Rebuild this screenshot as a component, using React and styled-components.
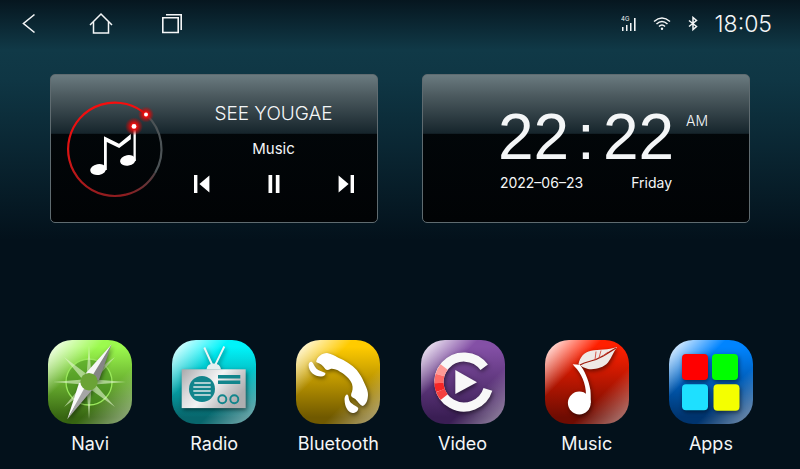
import React from 'react'
import styled, { createGlobalStyle } from 'styled-components'

const GlobalStyle = createGlobalStyle`
    * {
        box-sizing: border-box;
    }

    body {
        margin: 0;
        background-color: #03111b;
        color: #f4f6f7;
        font-family: Inter, "Liberation Sans", sans-serif;
    }
`

const apps = [
    { name: 'Navi', top: '#9cfa4e', bottom: '#376512', icon: <NaviIcon /> },
    { name: 'Radio', top: '#00f4fa', bottom: '#08666c', icon: <RadioIcon /> },
    { name: 'Bluetooth', top: '#ffcb00', bottom: '#705900', icon: <PhoneIcon /> },
    { name: 'Video', top: '#8450a6', bottom: '#3a1e54', icon: <VideoIcon /> },
    { name: 'Music', top: '#ff2000', bottom: '#6e0c02', icon: <MusicIcon /> },
    { name: 'Apps', top: '#0084ff', bottom: '#00346e', icon: <AppsIcon /> },
]

function App() {
    return (
        <Screen>
            <GlobalStyle />
            <StatusBar />
            <Widgets>
                <MusicWidget />
                <ClockWidget />
            </Widgets>
            <Dock>
                {apps.map(app => (
                    <DockItem key={app.name} href={`#${app.name.toLowerCase()}`}>
                        <Tile $top={app.top} $bottom={app.bottom}>{app.icon}</Tile>
                        <DockLabel>{app.name}</DockLabel>
                    </DockItem>
                ))}
            </Dock>
        </Screen>
    )
}

export default App

function StatusBar() {
    return (
        <Header>
            <NavButtons>
                <IconButton aria-label="Back">
                    <svg width="24" height="24" fill="none" stroke="#f4f6f7" strokeWidth="1.6">
                        <path d="M17.5 2.5L6.5 11.5L17.5 20.5" />
                    </svg>
                </IconButton>
                <IconButton aria-label="Home">
                    <svg width="24" height="24" fill="none" stroke="#f4f6f7" strokeWidth="1.5">
                        <path d="M1 13L12 2L23 13" />
                        <path d="M4.5 10V21H19.5V10" />
                    </svg>
                </IconButton>
                <IconButton aria-label="Recent apps">
                    <svg width="24" height="24" fill="none" stroke="#f4f6f7" strokeWidth="1.6">
                        <path d="M1.8 5.8H17.2V20.5H1.8Z" />
                        <path d="M5 2.8H20.2V18" />
                    </svg>
                </IconButton>
            </NavButtons>
            <Indicators>
                <svg width="16" height="16" fill="#f4f6f7">
                    <text x="0" y="5" fontSize="6" fontFamily="Inter, sans-serif">4G</text>
                    <path d="M1 11h1.5v4H1zM5 9h1.5v6H5zM9 7h1.5v8H9zM13 2h1.6v13H13z" />
                </svg>
                <svg width="18" height="16" fill="none" stroke="#f4f6f7" strokeWidth="1.5">
                    <path d="M1 5.5Q9 -1.5 17 5.5" />
                    <path d="M3.5 8Q9 3 14.5 8" />
                    <path d="M6 10.5Q9 7.5 12 10.5" />
                    <circle cx="9" cy="12.8" r="1.2" fill="#f4f6f7" stroke="none" />
                </svg>
                <svg width="12" height="16" fill="none" stroke="#f4f6f7" strokeWidth="1.5">
                    <path d="M2 4.5L9.5 10.5L6 13.5V1.5L9.5 4.5L2 10.5" />
                </svg>
                <SystemTime>18:05</SystemTime>
            </Indicators>
        </Header>
    )
}

function MusicWidget() {
    return (
        <MusicCard>
            <svg width="104" height="104" viewBox="12 22 104 104">
                <defs>
                    <linearGradient id="ring" gradientUnits="userSpaceOnUse" x1="60" y1="27" x2="72" y2="122">
                        <stop offset="0" stopColor="#f80d0d" />
                        <stop offset="0.5" stopColor="#d81414" />
                        <stop offset="1" stopColor="#8d1d20" />
                    </linearGradient>
                    <linearGradient id="tail" gradientUnits="userSpaceOnUse" x1="76" y1="120" x2="108" y2="92">
                        <stop offset="0" stopColor="#8d1d20" />
                        <stop offset="1" stopColor="#43474a" />
                    </linearGradient>
                    <radialGradient id="glow">
                        <stop offset="0.25" stopColor="#ff1010" />
                        <stop offset="0.5" stopColor="#d80c0c" stopOpacity="0.8" />
                        <stop offset="1" stopColor="#c00808" stopOpacity="0" />
                    </radialGradient>
                </defs>
                <g fill="none" strokeWidth="2.2">
                    <path d="M96 39.5A46.7 46.7 0 0 1 105 98" stroke="#4c5356" />
                    <path d="M105 98A46.7 46.7 0 0 1 76 119.6" stroke="url(#tail)" />
                    <path d="M76 119.6A46.7 46.7 0 1 1 96 39.5" stroke="url(#ring)" />
                </g>
                <g fill="#ffffff">
                    <ellipse cx="48.2" cy="94.6" rx="8" ry="5.4" transform="rotate(-10 48.2 94.6)" />
                    <ellipse cx="77.8" cy="85.4" rx="7.8" ry="5.3" transform="rotate(-10 77.8 85.4)" />
                    <path d="M54 61.3L69 68.7L80.8 59V64.2L69.2 73L56.8 67V95H54Z" />
                    <path d="M83.5 55H85.8V86H83.5Z" />
                </g>
                <circle cx="96" cy="39.5" r="8" fill="url(#glow)" />
                <circle cx="96" cy="39.5" r="2" fill="#ffffff" />
                <circle cx="84" cy="51.4" r="9" fill="url(#glow)" />
                <circle cx="84" cy="51.4" r="2.4" fill="#ffffff" />
            </svg>
            <Player>
                <TrackTitle>SEE YOUGAE</TrackTitle>
                <TrackSource>Music</TrackSource>
                <Controls>
                    <IconButton aria-label="Previous">
                        <svg width="16" height="18" fill="#ffffff">
                            <path d="M0 0H3.4V18H0ZM5.4 9L15.4 0.5V17.5Z" />
                        </svg>
                    </IconButton>
                    <IconButton aria-label="Pause">
                        <svg width="12" height="18" fill="#ffffff">
                            <path d="M0.5 0H4.2V18H0.5ZM7.8 0H11.5V18H7.8Z" />
                        </svg>
                    </IconButton>
                    <IconButton aria-label="Next">
                        <svg width="16" height="18" fill="#ffffff">
                            <path d="M0.6 0.5L10.6 9L0.6 17.5ZM12.6 0H16V18H12.6Z" />
                        </svg>
                    </IconButton>
                </Controls>
            </Player>
        </MusicCard>
    )
}

function ClockWidget() {
    return (
        <ClockCard>
            <Clock>
                <Digits>
                    <span>22</span>
                    <span>:</span>
                    <span>22</span>
                </Digits>
                <DateRow>
                    <span>2022–06–23</span>
                    <span>Friday</span>
                </DateRow>
            </Clock>
            <Meridiem>AM</Meridiem>
        </ClockCard>
    )
}

function NaviIcon() {
    return (
        <svg width="84" height="84">
            <circle cx="41" cy="42" r="23" fill="#3f8a1c" fillOpacity="0.5" stroke="#9ae85c" strokeWidth="1.3" />
            <g fill="#e4f7d0" fillOpacity="0.6">
                <path d="M41 5L43.5 36L41 42L38.5 36ZM41 79L43.5 48L41 42L38.5 48Z" />
                <path d="M5 42L35 39.5L41 42L35 44.5ZM78 42L47 39.5L41 42L47 44.5Z" />
                <path d="M16 17L40 35L41 42L35 40ZM67 67L42 49L41 42L47 44Z" />
                <path d="M16 67L35 44L41 42L40 49ZM67 17L47 40L41 42L42 35Z" />
            </g>
            <Shadowed>
                <path d="M63.7 4.3L38 33L41 42L46 36Z" fill="#f6f6f6" />
                <path d="M63.7 4.3L46 33L41 42L51 40Z" fill="#858585" />
                <path d="M19.3 79.3L31 43L41 42L38 48Z" fill="#fbfbfb" />
                <path d="M19.3 79.3L37 47L41 42L44 50Z" fill="#a5a5a5" />
            </Shadowed>
            <circle cx="41" cy="41.7" r="8.7" fill="#6ba336" />
        </svg>
    )
}

function RadioIcon() {
    return (
        <svg width="84" height="84">
            <defs>
                <linearGradient id="silver" x1="0" y1="0" x2="1" y2="0.5">
                    <stop offset="0" stopColor="#a8a8aa" />
                    <stop offset="0.3" stopColor="#d8d8da" />
                    <stop offset="0.55" stopColor="#f4f4f4" />
                    <stop offset="0.8" stopColor="#c9c9cb" />
                    <stop offset="1" stopColor="#aeaeb0" />
                </linearGradient>
            </defs>
            <Shadowed>
                <path d="M40.3 25L32.3 7.5M43.2 25L52.3 6.5" stroke="#ecf6f6" strokeWidth="1.9" />
                <path d="M34.5 29.5Q35 23.5 41.7 23.5Q48.4 23.5 49 29.5Z" fill="#e4f0f1" />
                <rect x="9.7" y="29.3" width="64" height="38.8" fill="url(#silver)" />
            </Shadowed>
            <circle cx="30" cy="49" r="13" fill="#12858c" />
            <path d="M22.3 43H38.7M21.3 47H38.7M21.3 51H38.7M22.3 55H38.7" stroke="#dfe8e8" strokeWidth="1.5" />
            <path d="M46 35H68.3V38.6H46ZM46 40.4H68.3V44H46Z" fill="#12858c" />
            <g fill="none" stroke="#12858c" strokeWidth="1.9">
                <circle cx="50.3" cy="59.3" r="4" />
                <circle cx="62.3" cy="59.3" r="4" />
            </g>
        </svg>
    )
}

function PhoneIcon() {
    return (
        <svg width="84" height="84">
            <Shadowed fill="#ffffff">
                <path d="M20.2 22C20.5 17 26 13 31 13C35 13.5 38 15.5 42.3 17.7C49 20.5 56 24.5 60.7 30C65.5 36 67 40 69 44.5C71 49 72.2 52 72 55C71.8 60 70.5 64 66.8 66C63.5 65 61.5 60.5 58.5 58.5C55.5 57 54.5 56 55.3 53.5C56.5 51 57.2 48 56 44C54 38.5 49 34.5 44 31.7C40.5 29.5 37 28.5 34.5 29C32.5 29.8 31 30.5 29.5 29.3C28 27.5 27 26 25.5 24.8C24 23.5 22 23 20.2 22Z" />
                <path d="M12.6 24.8C13 22.8 14.5 21.3 15.8 22C17.5 23 18 26 20.3 28.6C22.5 31.2 26.5 31.4 29.4 33C29.6 35 28 36.6 25 36.6C19 36.6 12.6 32.3 12.6 24.8Z" />
                <path d="M48.6 60.2C48.4 57.2 49.6 54.6 51.3 54.6C53 55.6 52.2 57.8 53.5 60.8C55 64.3 59.8 65.3 62.2 68C62.5 70.5 60 73.2 56.5 73C51.5 72 48.8 66.2 48.6 60.2Z" />
            </Shadowed>
        </svg>
    )
}

function VideoIcon() {
    return (
        <svg width="84" height="84">
            <Shadowed fill="none" strokeWidth="9.2">
                <path d="M63.2 27.3A25 25 0 1 0 66.9 49.3" stroke="#f8f8f8" />
                <path d="M23.2 27A25 25 0 0 0 19 35" stroke="#ff9a96" />
                <path d="M19 35A25 25 0 0 0 18 43" stroke="#ff6a66" />
                <path d="M18 43A25 25 0 0 0 19.4 50.5" stroke="#f62626" />
                <path d="M19.4 50.5A25 25 0 0 0 23.2 57.2" stroke="#f44040" />
                <path d="M34.3 30L56 42.3L34.3 54Z" fill="#f8f8f8" />
            </Shadowed>
        </svg>
    )
}

function MusicIcon() {
    return (
        <svg width="84" height="84">
            <Shadowed>
                <path d="M33.5 24C35 17 39 12.5 46 10.8C54 9 63 10.5 72 7C68 13 66.5 18 63 22.5C58 28 50 29.8 43 29C39 28 36 26 33.5 24Z" fill="#efe9e6" />
                <path d="M27.7 24.2L35 24.8C39 30 43.5 39 45.4 50C45.8 54 45.8 59 45.7 63H41V55C41 43 36 33 29.5 26.5Z" fill="#ffffff" />
                <circle cx="34.3" cy="63" r="11.4" fill="#ffffff" />
            </Shadowed>
            <path d="M35 25C42 20.5 48 22 55 17.5C61 14.5 66 11 71 8" fill="none" stroke="#9e1a0c" strokeWidth="1.2" />
            <path d="M50 20L51 11.5M54 18L56 10.5M58 16L63 12" fill="none" stroke="#d24a3c" strokeWidth="0.9" />
        </svg>
    )
}

function AppsIcon() {
    return (
        <svg width="84" height="84">
            <Shadowed>
                <rect x="13" y="14" width="26" height="26" rx="4" fill="#ff0000" />
                <rect x="43" y="14" width="26" height="26" rx="4" fill="#00ff00" />
                <rect x="13" y="44.3" width="26" height="26" rx="4" fill="#1ee0ff" />
                <rect x="44.5" y="44.3" width="26" height="26.5" rx="4" fill="#f4ff00" />
            </Shadowed>
        </svg>
    )
}

const Screen = styled.div`
    display: flex;
    flex-direction: column;
    min-height: 100vh;
    background: linear-gradient(#06161f 0, #103947 50px, #0f3644 80px, #03111b 240px, #03111b 100%);
`
const Header = styled.header`
    display: flex;
    align-items: center;
    justify-content: space-between;
    height: 48px;
    padding: 0 28px 0 17px;
`
const NavButtons = styled.nav`
    display: flex;
    gap: 48px;
`
const IconButton = styled.button`
    display: grid;
    place-items: center;
    min-width: 24px;
    height: 24px;
    padding: 0;
    border: none;
    background: none;
    cursor: pointer;
`
const Indicators = styled.div`
    display: flex;
    align-items: center;
    gap: 16px;
`
const SystemTime = styled.time`
    font-size: 23px;
    font-weight: 300;
`
const Widgets = styled.main`
    display: grid;
    grid-template-columns: 1fr 1fr;
    gap: 44px;
    padding: 26px 50px 24px;
`
const Card = styled.section`
    display: grid;
    align-items: center;
    min-height: 149px;
    border: 1px solid #5f6b70;
    border-radius: 5px;
    background: linear-gradient(#6b7b80 0, #4c5a5f 35%, #15242b 100%) top / 100% 40% no-repeat,
        linear-gradient(#02080b, #010305);
`
const MusicCard = styled(Card)`
    grid-template-columns: 104px 1fr;
    column-gap: 4px;
    padding-left: 11px;
`
const Player = styled.div`
    display: flex;
    flex-direction: column;
    align-items: center;
`
const TrackTitle = styled.h2`
    margin: 0;
    font-size: 19px;
    font-weight: 300;
    line-height: 40px;
`
const TrackSource = styled.p`
    margin: 0;
    font-size: 15px;
    line-height: 30px;
`
const Controls = styled.div`
    display: flex;
    gap: 48px;
    padding: 8px 0;
`
const ClockCard = styled(Card)`
    grid-template-columns: 1fr auto 1fr;
    column-gap: 12px;
`
const Clock = styled.div`
    grid-column: 2;
`
const Digits = styled.div`
    display: flex;
    justify-content: center;
    gap: 8px;
    font-family: "Liberation Sans", Arial, sans-serif;
    font-size: 64px;
    line-height: 68px;
`
const DateRow = styled.div`
    display: flex;
    justify-content: space-between;
    padding: 0 2px;
    font-size: 14px;
    line-height: 24px;
`
const Meridiem = styled.span`
    align-self: start;
    padding-top: 36px;
    font-size: 14px;
    font-weight: 300;
    line-height: 20px;
`
const Dock = styled.nav`
    display: grid;
    grid-template-columns: repeat(6, 1fr);
    margin-top: auto;
    padding: 0 27px 13px 28px;
`
const DockItem = styled.a`
    display: flex;
    flex-direction: column;
    align-items: center;
    gap: 8px;
    color: inherit;
    text-decoration: none;
`
const Tile = styled.span`
    display: block;
    width: 84px;
    height: 84px;
    border-radius: 24px;
    background: linear-gradient(135deg, rgba(255, 255, 255, 0.8) 8%, rgba(255, 255, 255, 0) 34%),
        linear-gradient(315deg, rgba(255, 255, 255, 0.36) 10%, rgba(255, 255, 255, 0) 34%),
        linear-gradient(${props => props.$top} 8%, ${props => props.$bottom} 92%);
`
const DockLabel = styled.span`
    font-size: 18px;
    line-height: 24px;
`
const Shadowed = styled.g`
    filter: drop-shadow(1px 2px 2px rgba(0, 0, 0, 0.5));
`
